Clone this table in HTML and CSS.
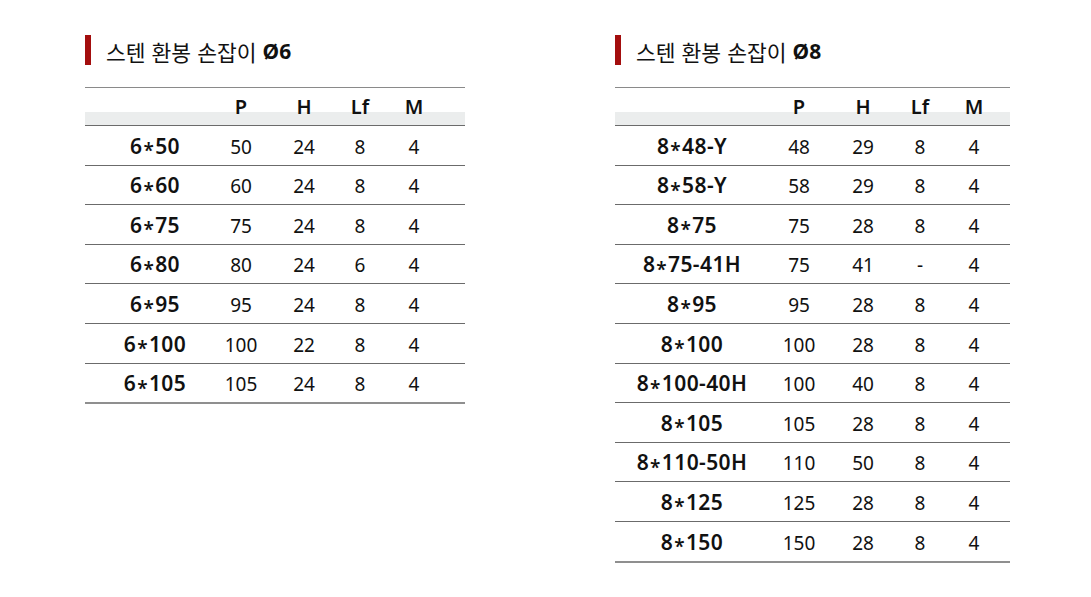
FILE: index.html
```html
<!DOCTYPE html>
<html lang="ko">
<head>
<meta charset="utf-8">
<link rel="stylesheet" href="styles.css">
</head>
<body>
<div class="page">
  <section class="panel panel-left">
    <h2 class="title"><span class="title-ko">스텐 환봉 손잡이</span> <b>Ø6</b></h2>
    <div class="table">
      <div class="row head"><div class="c name"></div><div class="c">P</div><div class="c">H</div><div class="c">Lf</div><div class="c">M</div></div>
      <div class="row"><div class="c name">6<i>*</i>50</div><div class="c">50</div><div class="c">24</div><div class="c">8</div><div class="c">4</div></div>
      <div class="row"><div class="c name">6<i>*</i>60</div><div class="c">60</div><div class="c">24</div><div class="c">8</div><div class="c">4</div></div>
      <div class="row"><div class="c name">6<i>*</i>75</div><div class="c">75</div><div class="c">24</div><div class="c">8</div><div class="c">4</div></div>
      <div class="row"><div class="c name">6<i>*</i>80</div><div class="c">80</div><div class="c">24</div><div class="c">6</div><div class="c">4</div></div>
      <div class="row"><div class="c name">6<i>*</i>95</div><div class="c">95</div><div class="c">24</div><div class="c">8</div><div class="c">4</div></div>
      <div class="row"><div class="c name">6<i>*</i>100</div><div class="c">100</div><div class="c">22</div><div class="c">8</div><div class="c">4</div></div>
      <div class="row last"><div class="c name">6<i>*</i>105</div><div class="c">105</div><div class="c">24</div><div class="c">8</div><div class="c">4</div></div>
    </div>
  </section>
  <section class="panel panel-right">
    <h2 class="title"><span class="title-ko">스텐 환봉 손잡이</span> <b>Ø8</b></h2>
    <div class="table">
      <div class="row head"><div class="c name"></div><div class="c">P</div><div class="c">H</div><div class="c">Lf</div><div class="c">M</div></div>
      <div class="row"><div class="c name">8<i>*</i>48-Y</div><div class="c">48</div><div class="c">29</div><div class="c">8</div><div class="c">4</div></div>
      <div class="row"><div class="c name">8<i>*</i>58-Y</div><div class="c">58</div><div class="c">29</div><div class="c">8</div><div class="c">4</div></div>
      <div class="row"><div class="c name">8<i>*</i>75</div><div class="c">75</div><div class="c">28</div><div class="c">8</div><div class="c">4</div></div>
      <div class="row"><div class="c name">8<i>*</i>75-41H</div><div class="c">75</div><div class="c">41</div><div class="c">-</div><div class="c">4</div></div>
      <div class="row"><div class="c name">8<i>*</i>95</div><div class="c">95</div><div class="c">28</div><div class="c">8</div><div class="c">4</div></div>
      <div class="row"><div class="c name">8<i>*</i>100</div><div class="c">100</div><div class="c">28</div><div class="c">8</div><div class="c">4</div></div>
      <div class="row"><div class="c name">8<i>*</i>100-40H</div><div class="c">100</div><div class="c">40</div><div class="c">8</div><div class="c">4</div></div>
      <div class="row"><div class="c name">8<i>*</i>105</div><div class="c">105</div><div class="c">28</div><div class="c">8</div><div class="c">4</div></div>
      <div class="row"><div class="c name">8<i>*</i>110-50H</div><div class="c">110</div><div class="c">50</div><div class="c">8</div><div class="c">4</div></div>
      <div class="row"><div class="c name">8<i>*</i>125</div><div class="c">125</div><div class="c">28</div><div class="c">8</div><div class="c">4</div></div>
      <div class="row last"><div class="c name">8<i>*</i>150</div><div class="c">150</div><div class="c">28</div><div class="c">8</div><div class="c">4</div></div>
    </div>
  </section>
</div>
</body>
</html>
```

FILE: styles.css
```css
html, body {
  margin: 0;
  padding: 0;
  background: #ffffff;
}

body {
  font-family: "Noto Sans", "Noto Sans CJK KR", sans-serif;
  color: #111111;
}

.page {
  display: flex;
  align-items: flex-start;
  gap: 150px;
  padding: 35px 0 0 85px;
}

.panel-left { width: 380px; }
.panel-right { width: 395px; }

.title {
  margin: 0 0 22px 0;
  height: 30px;
  box-sizing: border-box;
  display: flex;
  align-items: center;
  gap: 6px;
  border-left: 6px solid #a30e0e;
  padding: 3px 0 0 15px;
  font-size: 21.5px;
  font-weight: 400;
  line-height: 27px;
  color: #111;
  white-space: pre;
}

.title-ko {
  font-family: "Noto Sans CJK KR", sans-serif;
  font-weight: 400;
}

.title b {
  font-weight: 700;
  font-size: 21px;
}

.table {
  border-top: 1px solid #8a8a8a;
  border-bottom: 2px solid #8f8f8f;
}

.row {
  display: grid;
  height: 39.6px;
  box-sizing: border-box;
  align-content: center;
  align-items: baseline;
  border-bottom: 1px solid #6b6b6b;
  font-size: 19px;
  padding-top: 5px;
}

.row.last { border-bottom: none; height: 38.6px; }

.panel-left .row { grid-template-columns: 125px 62px 64px 48px 60px 1fr; }
.panel-left .row .name { padding-left: 15px; }
.panel-right .row { grid-template-columns: 154px 60px 68px 46px 62px 1fr; }

.row.head {
  height: 38px;
  padding-top: 0;
  background: linear-gradient(to bottom, #ffffff 24px, #ebeded 24px);
  font-weight: 600;
  font-size: 20px;
}

.c {
  text-align: center;
  line-height: 24px;
}

.name {
  font-weight: 600;
  font-size: 21px;
  letter-spacing: 0.4px;
}

.name i {
  font-style: normal;
  font-size: 0.9em;
  vertical-align: -0.18em;
  padding: 0 1px;
}
```
